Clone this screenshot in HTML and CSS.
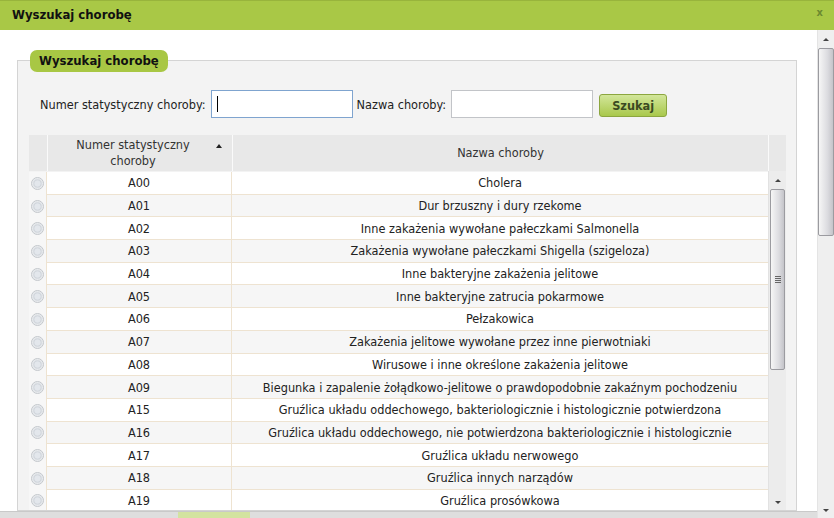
FILE: index.html
```html
<!DOCTYPE html>
<html lang="pl">
<head>
<meta charset="utf-8">
<title>Wyszukaj chorobę</title>
<link rel="stylesheet" href="styles.css">
</head>
<body>
<div class="titlebar">
  <span class="title">Wyszukaj chorobę</span>
  <span class="close">x</span>
</div>
<div class="window">
  <div class="main">
    <div class="fieldset">
      <div class="legend">Wyszukaj chorobę</div>
      <div class="form">
        <label class="lbl">Numer statystyczny choroby:</label>
        <div class="input focused"><span class="caret"></span></div>
        <label class="lbl">Nazwa choroby:</label>
        <div class="input"></div>
        <button class="btn">Szukaj</button>
      </div>
      <div class="grid">
        <div class="ghead">
          <div class="hc hradio"></div>
          <div class="hc hcode">Numer statystyczny<br>choroby<span class="sort"></span></div>
          <div class="hc hname">Nazwa choroby</div>
          <div class="hc hsb"></div>
        </div>
        <div class="gbody">
          <div class="rows">
            <div class="row"><div class="c r"><span class="radio"></span></div><div class="c code">A00</div><div class="c name">Cholera</div></div>
            <div class="row alt"><div class="c r"><span class="radio"></span></div><div class="c code">A01</div><div class="c name">Dur brzuszny i dury rzekome</div></div>
            <div class="row"><div class="c r"><span class="radio"></span></div><div class="c code">A02</div><div class="c name">Inne zakażenia wywołane pałeczkami Salmonella</div></div>
            <div class="row alt"><div class="c r"><span class="radio"></span></div><div class="c code">A03</div><div class="c name">Zakażenia wywołane pałeczkami Shigella (szigeloza)</div></div>
            <div class="row"><div class="c r"><span class="radio"></span></div><div class="c code">A04</div><div class="c name">Inne bakteryjne zakażenia jelitowe</div></div>
            <div class="row alt"><div class="c r"><span class="radio"></span></div><div class="c code">A05</div><div class="c name">Inne bakteryjne zatrucia pokarmowe</div></div>
            <div class="row"><div class="c r"><span class="radio"></span></div><div class="c code">A06</div><div class="c name">Pełzakowica</div></div>
            <div class="row alt"><div class="c r"><span class="radio"></span></div><div class="c code">A07</div><div class="c name">Zakażenia jelitowe wywołane przez inne pierwotniaki</div></div>
            <div class="row"><div class="c r"><span class="radio"></span></div><div class="c code">A08</div><div class="c name">Wirusowe i inne określone zakażenia jelitowe</div></div>
            <div class="row alt"><div class="c r"><span class="radio"></span></div><div class="c code">A09</div><div class="c name">Biegunka i zapalenie żołądkowo-jelitowe o prawdopodobnie zakaźnym pochodzeniu</div></div>
            <div class="row"><div class="c r"><span class="radio"></span></div><div class="c code">A15</div><div class="c name">Gruźlica układu oddechowego, bakteriologicznie i histologicznie potwierdzona</div></div>
            <div class="row alt"><div class="c r"><span class="radio"></span></div><div class="c code">A16</div><div class="c name">Gruźlica układu oddechowego, nie potwierdzona bakteriologicznie i histologicznie</div></div>
            <div class="row"><div class="c r"><span class="radio"></span></div><div class="c code">A17</div><div class="c name">Gruźlica układu nerwowego</div></div>
            <div class="row alt"><div class="c r"><span class="radio"></span></div><div class="c code">A18</div><div class="c name">Gruźlica innych narządów</div></div>
            <div class="row"><div class="c r"><span class="radio"></span></div><div class="c code">A19</div><div class="c name">Gruźlica prosówkowa</div></div>
          </div>
          <div class="sb inner">
            <span class="arr up"></span>
            <div class="thumb ithumb"><span class="grip"></span></div>
            <div class="sbfill"></div>
            <span class="arr down"></span>
          </div>
        </div>
      </div>
    </div>
    <div class="strip"><span class="sbtn"></span></div>
  </div>
  <div class="sb outer">
    <span class="arr up"></span>
    <div class="thumb othumb"></div>
    <div class="sbfill"></div>
    <span class="arr down"></span>
  </div>
</div>
</body>
</html>
```
FILE: styles.css
```css
html, body { margin: 0; padding: 0; }
body {
  width: 834px;
  height: 518px;
  overflow: hidden;
  background: #fff;
  font-family: "DejaVu Sans Condensed", "DejaVu Sans", sans-serif;
  font-size: 12.6px;
  color: #222;
}
.titlebar {
  height: 30px;
  box-sizing: border-box;
  background: #a9c846;
  border-top: 1px solid #98b43c;
  display: flex;
  align-items: center;
  justify-content: space-between;
  padding: 0 11px 2px 12px;
}
.title { font-weight: bold; font-size: 13px; color: #111; }
.close { color: #6c8a30; font-size: 11px; font-weight: bold; margin-bottom: 4px; }
.window { display: flex; height: 488px; }
.main {
  width: 817px;
  padding: 30px 0 0 17px;
  box-sizing: border-box;
  display: flex;
  flex-direction: column;
}
.fieldset {
  width: 780px;
  height: 451px;
  box-sizing: border-box;
  border: 1px solid #d4d4d4;
  background: #f3f3f3;
  padding: 0 10px 0 11px;
  flex: none;
}
.legend {
  display: block;
  width: max-content;
  margin: -11px 0 0 1px;
  height: 22px;
  line-height: 22px;
  padding: 0 9px;
  background: #a8c744;
  border-radius: 7px;
  font-weight: bold;
  font-size: 13px;
  color: #111;
}
.form {
  display: flex;
  align-items: center;
  height: 28px;
  margin-top: 18px;
  padding-left: 11px;
  color: #222;
}
.lbl { margin-right: 5px; }
.input {
  width: 142px;
  height: 28px;
  box-sizing: border-box;
  border: 1px solid #c2c4c8;
  background: #fff;
  margin-right: 4px;
  display: flex;
  align-items: center;
  padding-left: 5px;
}
.input.focused { border-color: #7fa4cf; }
.caret { width: 1px; height: 16px; background: #000; }
.btn {
  margin-left: 2px;
  width: 68px;
  height: 23px;
  margin-top: 3px;
  border: 1px solid #8ca63f;
  border-radius: 3px;
  background: linear-gradient(#d2e69a, #a9c84c);
  font-family: inherit;
  font-weight: bold;
  font-size: 12.6px;
  color: #3b4a22;
  padding: 0;
}
.grid { margin-top: 17px; width: 757px; }
.ghead {
  display: grid;
  grid-template-columns: 18px 185px 536px 18px;
  height: 36px;
  background: #e8e8e8;
}
.hc {
  display: flex;
  align-items: center;
  justify-content: center;
  text-align: center;
  border-left: 1px solid #fafafa;
  color: #333;
  line-height: 16px;
}
.hradio { border-left: none; }
.hcode { position: relative; padding-right: 14px; }
.sort {
  position: absolute;
  right: 10px;
  top: 9px;
  width: 0; height: 0;
  border-left: 3px solid transparent;
  border-right: 3px solid transparent;
  border-bottom: 4px solid #222;
}
.gbody { display: flex; height: 339px; overflow: hidden; }
.rows { width: 739px; padding-top: 1px; }
.row {
  display: grid;
  grid-template-columns: 18px 185px 536px;
  height: 22.7px;
  background: #fff;
}
.row.alt { background: #f6f6f6; }
.c {
  display: flex;
  align-items: center;
  justify-content: center;
  box-sizing: border-box;
  border-bottom: 1px solid #eee3d1;
  white-space: nowrap;
}
.c.r { border-bottom: none; background: #f7f7f7; border-right: 1px solid #eee3d1; }
.c.code { border-right: 1px solid #eee3d1; }
.radio {
  width: 11px;
  height: 11px;
  border-radius: 50%;
  border: 1px solid #c3c7cc;
  background: radial-gradient(circle, #e3e7ec 0 35%, #d0d5db 45%, #eef0f2 70%);
  margin-left: -1px;
}
.sb {
  display: flex;
  flex-direction: column;
  align-items: center;
  background: #ececec;
  flex: none;
}
.sb.inner { width: 18px; border-left: 1px solid #e2e2e2; box-sizing: border-box; }
.sb.outer { width: 17px; border-left: 1px solid #e4e4e4; box-sizing: border-box; background: #efefef; }
.arr {
  width: 0; height: 0;
  border-left: 3px solid transparent;
  border-right: 3px solid transparent;
  flex: none;
}
.arr.up { border-bottom: 3px solid #444; margin: 8px 0 7px; }
.arr.down { border-top: 3px solid #444; margin: 0 0 6px; }
.thumb {
  width: 15px;
  box-sizing: border-box;
  border: 1px solid #9b9ba0;
  border-radius: 2px;
  background: linear-gradient(90deg, #f6f6f6, #dcdce0 60%, #c4c4c9);
  display: flex;
  align-items: center;
  justify-content: center;
  flex: none;
}
.ithumb { height: 181px; }
.othumb { height: 188px; width: 16px; }
.grip {
  width: 6px;
  height: 7px;
  background: repeating-linear-gradient(#666 0 1px, transparent 1px 2px);
}
.sbfill { flex: 1; }
.strip {
  margin-left: -17px;
  height: 10px;
  background: #dedede;
  border-top: 1px solid #c9c9c9;
  flex: none;
}
.sbtn {
  display: block;
  margin-left: 178px;
  width: 72px;
  height: 10px;
  background: #d3e3a0;
}
```
